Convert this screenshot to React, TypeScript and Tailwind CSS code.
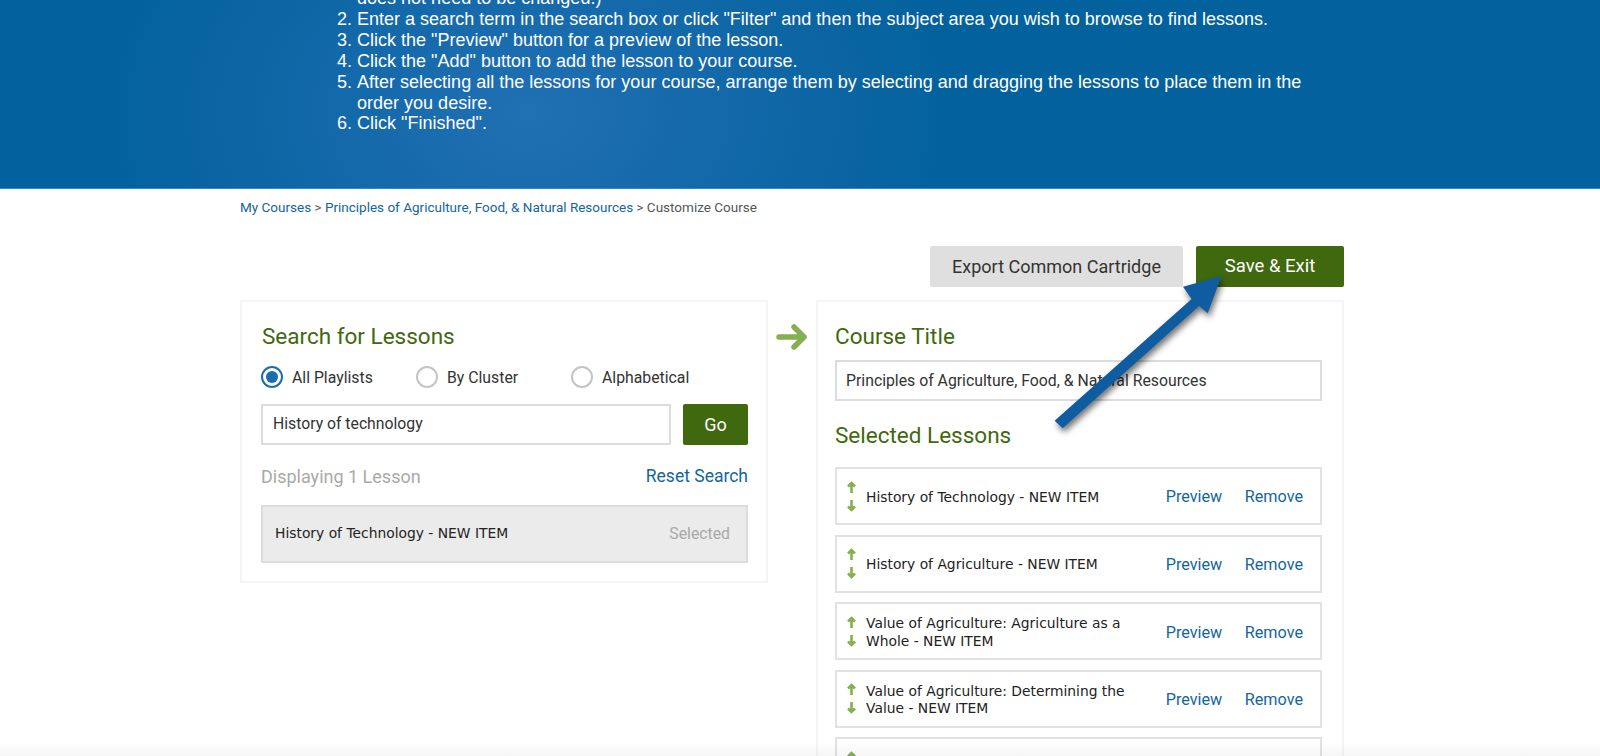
const Radio = ({ label, checked, className }: { label: string; checked?: boolean; className?: string }) => (
  <div className={`flex items-center gap-[9px] ${className ?? ""}`}>
    <span
      className={`flex h-[22px] w-[22px] items-center justify-center rounded-full border-2 bg-white ${
        checked ? "border-[#1b6cb0]" : "border-[#c4c4c4]"
      }`}
    >
      {checked && <span className="h-3 w-3 rounded-full bg-[#1b6cb0]" />}
    </span>
    <span className="mt-[1px] text-[15.8px] text-[#333]">{label}</span>
  </div>
);

const LessonRow = ({ title }: { title?: string }) => (
  <div className="flex h-[58px] shrink-0 items-center border-2 border-[#e2e2e2] pl-[10px] pr-[17px]">
    <div className="mr-[10px] flex w-[9px] shrink-0 flex-col items-center gap-[7px] text-[#85b04f]">
      <svg width="9" height="12" viewBox="0 0 9 12" fill="none" stroke="currentColor" strokeWidth="2.6">
        <path d="M4.5 12V2M1 5.5l3.5-3.5L8 5.5" />
      </svg>
      <svg width="9" height="12" viewBox="0 0 9 12" fill="none" stroke="currentColor" strokeWidth="2.6">
        <path d="M4.5 0v10M1 6.5 4.5 10 8 6.5" />
      </svg>
    </div>
    {title && (
      <>
        <p className="mt-[3px] w-[270px] font-['DejaVu_Sans',sans-serif] text-[13.85px] leading-[17.6px] text-[#222]">{title}</p>
        <div className="ml-auto mt-[3px] flex gap-[22.5px] text-[16.2px] text-[#1465a0]">
          <span>Preview</span>
          <span>Remove</span>
        </div>
      </>
    )}
  </div>
);

const lessons = [
  "History of Technology - NEW ITEM",
  "History of Agriculture - NEW ITEM",
  "Value of Agriculture: Agriculture as a Whole - NEW ITEM",
  "Value of Agriculture: Determining the Value - NEW ITEM",
];

export default function App() {
  return (
    <div className="relative h-[756px] w-[1600px] overflow-hidden bg-white font-['Roboto',sans-serif]">
      <header className="h-[189px] overflow-hidden border-b border-[#3a86c6] bg-[radial-gradient(ellipse_420px_300px_at_33%_60%,#2070b4_0%,#1268a8_50%,#03629d_100%)]">
        <ol className="ml-[339px] mt-[-12px] w-[975px] list-decimal pl-[18px] font-['Liberation_Sans',sans-serif] text-[18.03px] leading-[20.9px] text-white">
          <li className="list-none">does not need to be changed.)</li>
          <li value={2}>Enter a search term in the search box or click "Filter" and then the subject area you wish to browse to find lessons.</li>
          <li>Click the "Preview" button for a preview of the lesson.</li>
          <li>Click the "Add" button to add the lesson to your course.</li>
          <li>After selecting all the lessons for your course, arrange them by selecting and dragging the lessons to place them in the order you desire.</li>
          <li>Click "Finished".</li>
        </ol>
      </header>

      <main className="ml-[240px] w-[1104px]">
        <nav className="pt-[11px] text-[13.5px] leading-[15px] text-[#555]">
          <span className="text-[#1465a0]">My Courses</span> &gt;{" "}
          <span className="text-[#1465a0]">Principles of Agriculture, Food, &amp; Natural Resources</span> &gt; Customize Course
        </nav>

        <div className="mt-[31px] flex justify-end gap-[13px]">
          <button className="h-[41px] w-[253px] rounded-[2px] bg-[#dfdfdf] text-[18px] text-[#333]">Export Common Cartridge</button>
          <button className="h-[41px] w-[148px] rounded-[2px] bg-[#3f680f] text-[18.5px] text-white">Save &amp; Exit</button>
        </div>

        <div className="mt-[13px] flex items-start">
          <section className="h-[283px] w-[528px] border-2 border-[#f5f5f5] pl-[19px] pr-[18px] pt-[19px]">
            <h2 className="ml-[1px] text-[22.5px] leading-[30px] text-[#3f680f]">Search for Lessons</h2>
            <div className="mt-[14px] flex">
              <Radio label="All Playlists" checked className="w-[155px]" />
              <Radio label="By Cluster" className="w-[155px]" />
              <Radio label="Alphabetical" />
            </div>
            <div className="mt-[14px] flex justify-between">
              <div className="flex h-[41px] w-[410px] items-center border-2 border-[#dcdcdc] px-[10px] text-[15.75px] text-[#333]">History of technology</div>
              <button className="h-[41px] w-[65px] rounded-[2px] bg-[#3f680f] text-[18px] text-white">Go</button>
            </div>
            <div className="mt-[18px] flex items-center justify-between">
              <span className="text-[18px] text-[#a9a9a9]">Displaying 1 Lesson</span>
              <span className="text-[17.5px] text-[#1465a0]">Reset Search</span>
            </div>
            <div className="mt-[15px] flex h-[58px] items-center justify-between border-2 border-[#dcdcdc] bg-[#ebebeb] pl-[12px] pr-[16px]">
              <span className="font-['DejaVu_Sans',sans-serif] text-[13.85px] text-[#222]">History of Technology - NEW ITEM</span>
              <span className="text-[15.8px] text-[#a9a9a9]">Selected</span>
            </div>
          </section>

          <svg className="mx-[8px] mt-[24px] shrink-0" width="32" height="26" viewBox="0 0 32 26" fill="none" stroke="#85b04f" strokeWidth="5.5" strokeLinejoin="round" strokeLinecap="round" aria-hidden="true">
            <path d="M3 13h25M18 3l10 10-10 10" />
          </svg>

          <section className="h-[470px] w-[528px] shrink-0 border-2 border-[#f5f5f5] px-[17px] pt-[19px]">
            <h2 className="text-[22.5px] leading-[30px] text-[#3f680f]">Course Title</h2>
            <div className="mt-[9px] flex h-[41px] w-[487px] items-center border-2 border-[#dcdcdc] px-[9px] text-[15.8px] text-[#333]">
              Principles of Agriculture, Food, &amp; Natural Resources
            </div>
            <h2 className="mt-[19px] text-[22.5px] leading-[30px] text-[#3f680f]">Selected Lessons</h2>
            <div className="mt-[17px] flex w-[487px] flex-col gap-[9.6px]">
              {lessons.map((l) => (
                <LessonRow key={l} title={l} />
              ))}
              <LessonRow />
            </div>
          </section>
        </div>
      </main>

      <svg className="absolute left-[1050px] top-[270px] drop-shadow-[2px_4px_3px_rgba(0,0,0,0.55)]" width="190" height="170" viewBox="0 0 190 170" aria-hidden="true">
        <path d="M171.4 6 133 16.7 141.6 29 4.6 150.7 12.6 158.3 149.2 36 157.7 43.3Z" fill="#0f5ca0" />
      </svg>

      <div className="absolute inset-x-0 bottom-0 h-[14px] bg-gradient-to-t from-black/[0.035] to-transparent" />
    </div>
  );
}
